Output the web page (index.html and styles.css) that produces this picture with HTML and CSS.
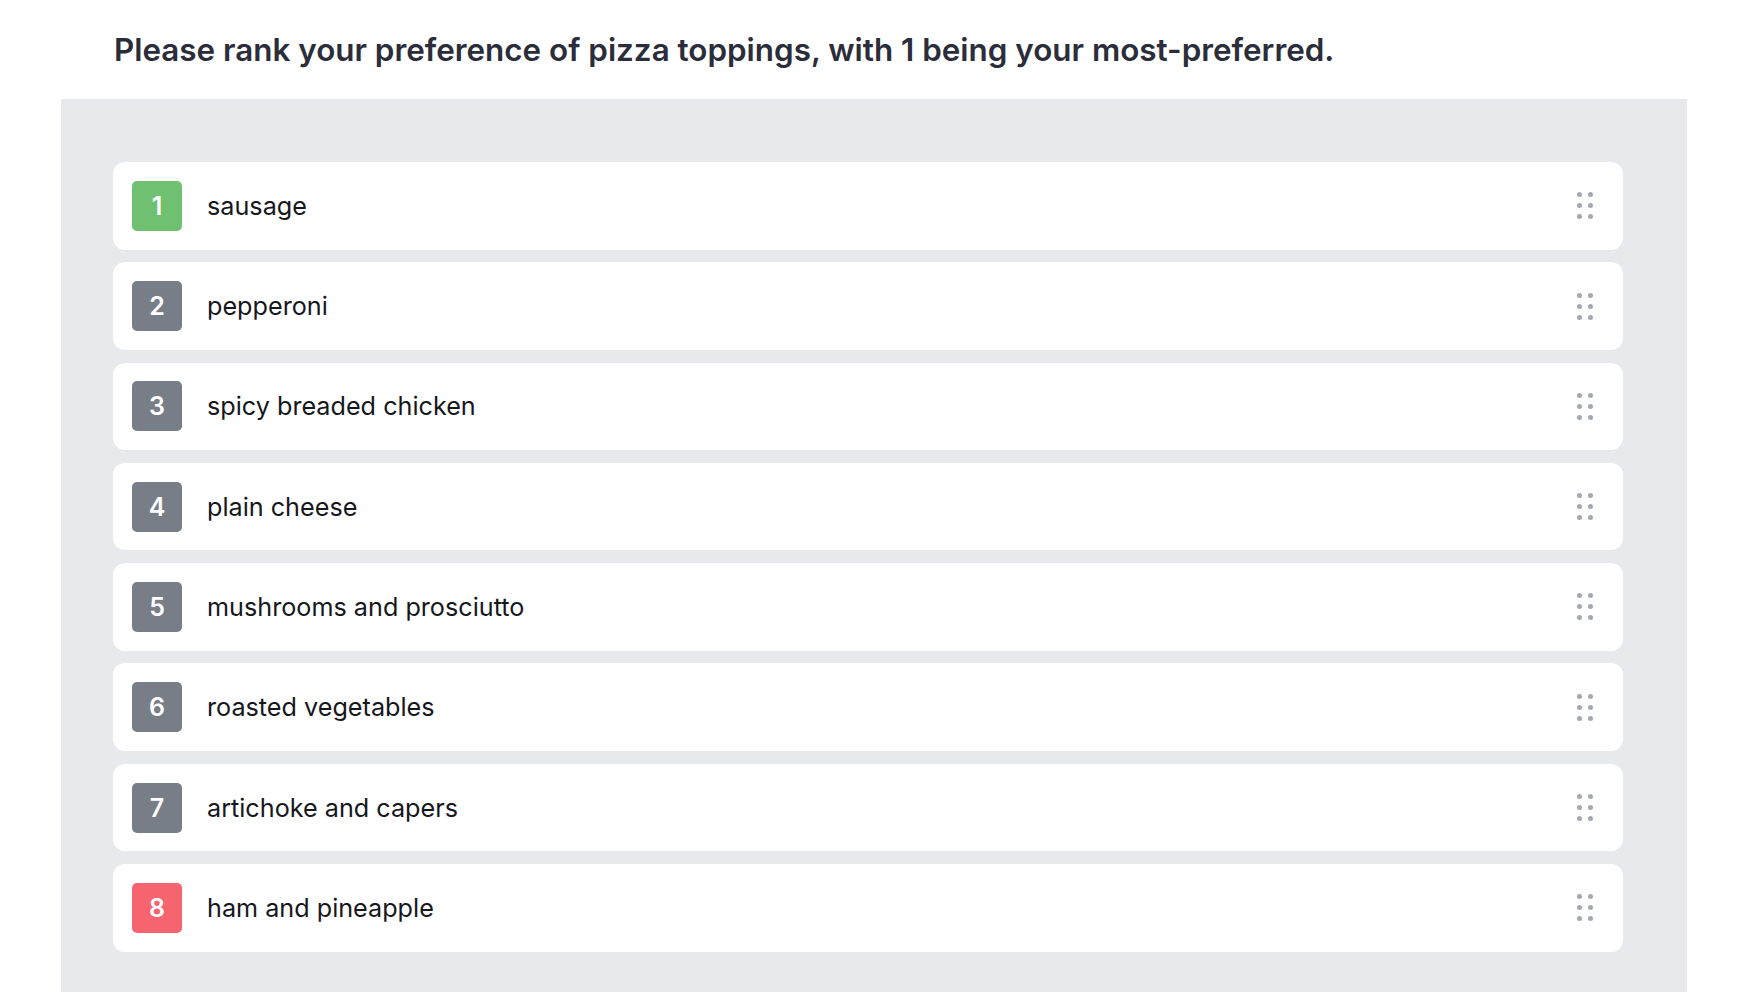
FILE: index.html
```html
<!DOCTYPE html>
<html lang="en">
<head>
<meta charset="utf-8">
<title>Rank pizza toppings</title>
<link rel="stylesheet" href="styles.css">
</head>
<body>
<h1 class="question">Please rank your preference of pizza toppings, with 1 being your most-preferred.</h1>
<div class="panel">
  <ol class="rank-list">
    <li class="rank-item"><span class="badge badge-top">1</span><span class="label">sausage</span><span class="grip"><i></i><i></i><i></i><i></i><i></i><i></i></span></li>
    <li class="rank-item"><span class="badge">2</span><span class="label">pepperoni</span><span class="grip"><i></i><i></i><i></i><i></i><i></i><i></i></span></li>
    <li class="rank-item"><span class="badge">3</span><span class="label">spicy breaded chicken</span><span class="grip"><i></i><i></i><i></i><i></i><i></i><i></i></span></li>
    <li class="rank-item"><span class="badge">4</span><span class="label">plain cheese</span><span class="grip"><i></i><i></i><i></i><i></i><i></i><i></i></span></li>
    <li class="rank-item"><span class="badge">5</span><span class="label">mushrooms and prosciutto</span><span class="grip"><i></i><i></i><i></i><i></i><i></i><i></i></span></li>
    <li class="rank-item"><span class="badge">6</span><span class="label">roasted vegetables</span><span class="grip"><i></i><i></i><i></i><i></i><i></i><i></i></span></li>
    <li class="rank-item"><span class="badge">7</span><span class="label">artichoke and capers</span><span class="grip"><i></i><i></i><i></i><i></i><i></i><i></i></span></li>
    <li class="rank-item"><span class="badge badge-bottom">8</span><span class="label">ham and pineapple</span><span class="grip"><i></i><i></i><i></i><i></i><i></i><i></i></span></li>
  </ol>
</div>
</body>
</html>
```
FILE: styles.css
```css
html, body {
  margin: 0;
  padding: 0;
  background: #ffffff;
}
body {
  font-family: Inter, "Noto Sans", "Liberation Sans", sans-serif;
  color: #16171c;
}
.question {
  margin: 31px 0 30px 114px;
  font-size: 31.4px;
  line-height: 38px;
  font-weight: 600;
  color: #2b2d3a;
}
.panel {
  margin: 0 61px;
  background: #e8e9ed;
  padding: 63px 64px 40px 52px;
}
.rank-list {
  list-style: none;
  margin: 0;
  padding: 0;
  display: flex;
  flex-direction: column;
  gap: 12.8px;
}
.rank-item {
  display: flex;
  align-items: center;
  height: 87.5px;
  background: #ffffff;
  border-radius: 12px;
  padding: 0 30px 0 19px;
}
.badge {
  flex: none;
  width: 50px;
  height: 50px;
  border-radius: 5px;
  background: #787e87;
  color: #ffffff;
  font-size: 25px;
  font-weight: 600;
  display: flex;
  align-items: center;
  justify-content: center;
}
.badge-top { background: #6fc070; }
.badge-bottom { background: #f5646f; }
.label {
  flex: 1;
  margin-left: 25px;
  font-size: 25.2px;
  color: #16171c;
}
.grip {
  flex: none;
  display: grid;
  grid-template-columns: 5px 5px;
  column-gap: 6px;
  row-gap: 6px;
}
.grip i {
  display: block;
  width: 5px;
  height: 5px;
  border-radius: 50%;
  background: #a3a8b2;
}
```
